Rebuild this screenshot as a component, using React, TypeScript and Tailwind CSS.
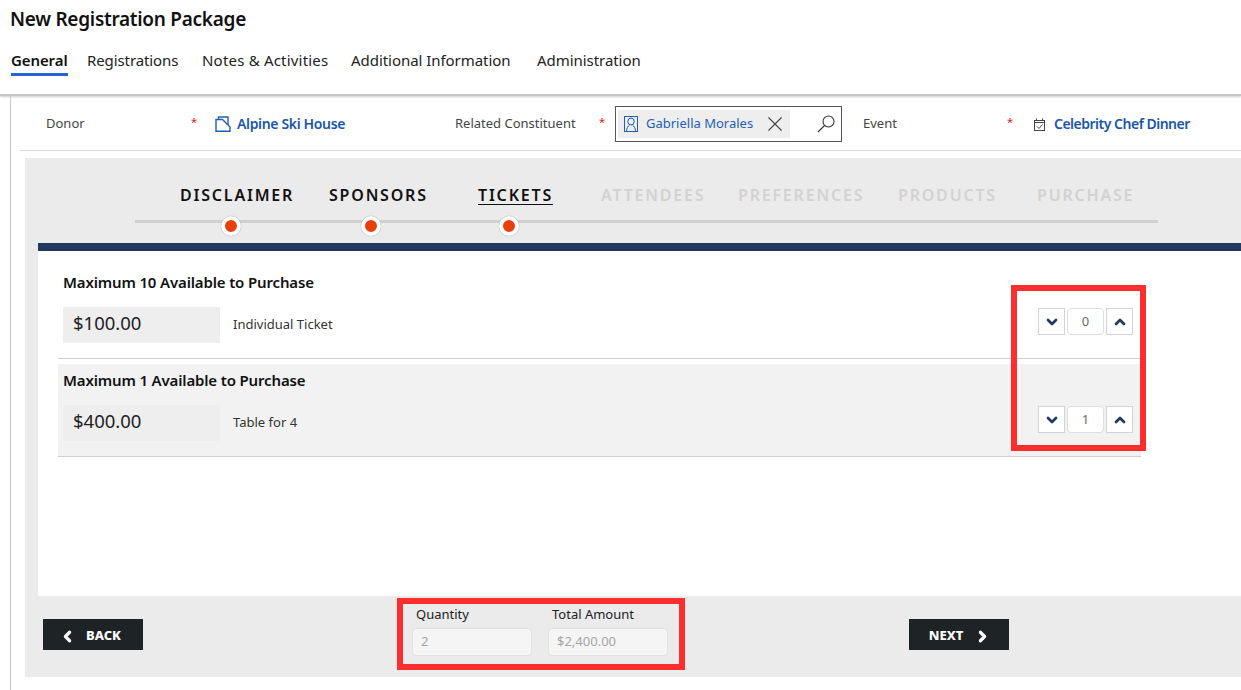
import React from "react";
import { ChevronDown, ChevronLeft, ChevronRight, ChevronUp } from "lucide-react";

const font = "font-['Noto_Sans','Open_Sans',sans-serif]";

const tabs = [
  { label: "General", w: "w-[76px]", active: true, track: "tracking-[-0.1px]" },
  { label: "Registrations", w: "w-[115px]", track: "tracking-[-0.1px]" },
  { label: "Notes & Activities", w: "w-[149px]", track: "tracking-[0.2px]" },
  { label: "Additional Information", w: "w-[186px]", track: "tracking-[-0.05px]" },
  { label: "Administration", w: "w-[120px]", track: "tracking-[-0.05px]" },
];

const steps = [
  { label: "DISCLAIMER", x: "w-[149px]", done: true },
  { label: "SPONSORS", x: "w-[149px]", done: true },
  { label: "TICKETS", x: "w-[123px]", done: true, current: true },
  { label: "ATTENDEES", x: "w-[137px]" },
  { label: "PREFERENCES", x: "w-[160px]" },
  { label: "PRODUCTS", x: "w-[139px]" },
  { label: "PURCHASE", x: "w-[110px]" },
];

const ContactIcon = ({ className }: { className?: string }) => (
  <svg viewBox="0 0 16 16" fill="none" stroke="currentColor" strokeWidth="1" className={className}>
    <rect x="1.5" y="0.5" width="13" height="15" />
    <ellipse cx="8" cy="5.5" rx="3.2" ry="3.5" />
    <path d="M3.5 15.5c0-3.5 1.6-5.6 3-6.4M12.5 15.5c0-3.5-1.6-5.6-3-6.4" />
  </svg>
);

const AccountIcon = ({ className }: { className?: string }) => (
  <svg viewBox="0 0 16 16" fill="none" stroke="currentColor" strokeWidth="1.4" className={className}>
    <path d="M1 3.5h6.5l7.5 7.5v4.3H1z" />
    <path d="M3.5 3.5V1h9.5v8" />
  </svg>
);

const LookupIcon = ({ className }: { className?: string }) => (
  <svg viewBox="0 0 18 18" fill="none" stroke="currentColor" strokeWidth="1.1" className={className}>
    <circle cx="11.5" cy="6.5" r="5.5" />
    <path d="M7.5 10.5L1 17" />
  </svg>
);

const EventIcon = ({ className }: { className?: string }) => (
  <svg viewBox="0 0 13 13" fill="none" stroke="currentColor" strokeWidth="1" className={className}>
    <rect x="1.5" y="2.5" width="10" height="10" />
    <path d="M1.5 4.5h10M3.5 0.5v2M9.5 0.5v2M4 8.5l2 2 3.5-4" />
  </svg>
);

const Stepper = ({ value }: { value: number }) => (
  <div className="flex items-center gap-[2px] mt-[1px]">
    <button className="w-[27px] h-[27px] flex items-center justify-center border border-[#d0d4d8] bg-white text-[#1f3864]">
      <ChevronDown size={16} strokeWidth={4} />
    </button>
    <div className="w-[37px] h-[27px] flex items-center justify-center border border-[#dcdfe3] rounded-[4px] bg-white text-[13px] text-[#6b6b6b]">
      {value}
    </div>
    <button className="w-[27px] h-[27px] flex items-center justify-center border border-[#d0d4d8] bg-white text-[#1f3864]">
      <ChevronUp size={16} strokeWidth={4} />
    </button>
  </div>
);

const TicketRow = ({ title, price, name, qty, shaded }: { title: string; price: string; name: string; qty: number; shaded?: boolean }) => (
  <div className={`w-[1083px] h-[93px] border-b border-[#cfcfcf] pl-[5px] pr-[8px] ${shaded ? "bg-[#f2f2f2]" : "bg-white"}`}>
    <div className="h-[41px] pt-[6px] text-[15px] leading-[20px] font-semibold text-[#111] tracking-[-0.15px]">{title}</div>
    <div className="flex items-start justify-between">
      <div className="flex items-center">
        <div className="w-[157px] h-[36px] bg-[#eeeeee] pl-[10px] pb-[5px] flex items-center text-[18.5px] text-[#222]">{price}</div>
        <span className="ml-[13px] text-[13px] text-[#333]">{name}</span>
      </div>
      <Stepper value={qty} />
    </div>
  </div>
);

const ReadField = ({ label, value }: { label: string; value: string }) => (
  <div className="w-[120px]">
    <div className="pl-[4px] text-[13px] leading-[18px] text-[#222]">{label}</div>
    <div className="mt-[5px] h-[28px] flex items-center pl-[8px] bg-[#f5f5f5] border border-[#e2e2e2] rounded-[4px] text-[13px] text-[#a5a5a5]">
      {value}
    </div>
  </div>
);

export default function App() {
  return (
    <div className={`relative w-[1241px] h-[690px] overflow-hidden bg-white ${font}`}>
      <header className="h-[96px] pl-[10px] border-b-2 border-[#c4c4c4] shadow-[0_1px_2px_rgba(0,0,0,0.2)]">
        <h1 className="pt-[7px] h-[48px] text-[19px] leading-[24px] font-semibold text-[#111] tracking-[-0.28px]">New Registration Package</h1>
        <nav className="flex pl-px">
          {tabs.map((t) => (
            <div key={t.label} className={t.w}>
              <div className={`inline-block h-[27px] text-[15px] leading-[22px] ${t.track} ${t.active ? "font-semibold border-b-[3px] border-[#2563d8] text-[#111]" : "text-[#222]"}`}>
                {t.label}
              </div>
            </div>
          ))}
        </nav>
      </header>

      <main className="ml-[10px] h-[594px] border-l border-[#c8c8c8] pl-[9px]">
        <div className="h-[55px] pt-[2px] border-b border-[#d8d8d8] flex items-center text-[13px] text-[#444]">
          <span className="ml-[26px] w-[145px]">Donor</span>
          <span className="w-[24px] text-[11px] -mt-[3px] text-[#e02020]">*</span>
          <AccountIcon className="w-[16px] h-[16px] text-[#1f5fb4]" />
          <span className="ml-[6px] w-[218px] -mt-[1px] text-[14px] font-semibold text-[#1a56a8] tracking-[-0.35px]">Alpine Ski House</span>
          <span className="w-[144px]">Related Constituent</span>
          <span className="w-[16px] text-[11px] -mt-[3px] text-[#e02020]">*</span>
          <div className="w-[227px] h-[36px] border border-[#555] pl-[2px] flex items-center">
            <div className="w-[172px] h-[28px] bg-[#eeeeee] pl-[5px] flex items-center text-[13px] text-[#1f5fb4]">
              <ContactIcon className="w-[16px] h-[16px] shrink-0" />
              <span className="ml-[7px]">Gabriella Morales</span>
              <svg viewBox="0 0 14 14" fill="none" stroke="#444" strokeWidth="1.1" className="ml-auto mr-[8px] w-[14px] h-[14px]">
                <path d="M0.5 0.5l13 13M13.5 0.5l-13 13" />
              </svg>
            </div>
            <LookupIcon className="ml-[27px] w-[18px] h-[18px] text-[#333]" />
          </div>
          <span className="ml-[21px] w-[144px]">Event</span>
          <span className="w-[26px] text-[11px] -mt-[3px] text-[#e02020]">*</span>
          <EventIcon className="w-[13px] h-[13px] text-[#444]" />
          <span className="ml-[8px] -mt-[1px] text-[14px] font-semibold text-[#1a56a8] tracking-[-0.5px]">Celebrity Chef Dinner</span>
        </div>

        <section className="mt-[7px] ml-[5px] h-[519px] bg-[#ebebeb] pl-[13px]">
          <div className="relative h-[85px]">
            <div className="flex pl-[142px] pt-[25px]">
              {steps.map((s) => (
                <div key={s.label} className={`${s.x} shrink-0`}>
                  <span className={`text-[16px] leading-[24px] font-semibold tracking-[1.8px] ${s.done ? "text-[#111]" : "text-[#d2d2d2]"} ${s.current ? "underline underline-offset-[3px] decoration-1" : ""}`}>
                    {s.label}
                  </span>
                </div>
              ))}
            </div>
            <div className="absolute left-[97px] top-[62px] w-[1023px] h-[3px] bg-[#d0d0d0]" />
            <span className="absolute left-[183px] top-[58px] w-[20px] h-[20px] rounded-full bg-[#ea3f0c] border-[4px] border-white shadow-[0_0_1px_rgba(0,0,0,0.45)]" />
            <span className="absolute left-[323px] top-[58px] w-[20px] h-[20px] rounded-full bg-[#ea3f0c] border-[4px] border-white shadow-[0_0_1px_rgba(0,0,0,0.45)]" />
            <span className="absolute left-[461px] top-[58px] w-[20px] h-[20px] rounded-full bg-[#ea3f0c] border-[4px] border-white shadow-[0_0_1px_rgba(0,0,0,0.45)]" />
          </div>
          <div className="h-[8px] bg-[#233a60]" />
          <div className="h-[345px] bg-white pl-[20px] pt-[15px]">
            <TicketRow title="Maximum 10 Available to Purchase" price="$100.00" name="Individual Ticket" qty={0} />
            <div className="h-[5px]" />
            <TicketRow title="Maximum 1 Available to Purchase" price="$400.00" name="Table for 4" qty={1} shaded />
          </div>
          <div className="h-[81px] flex items-start">
            <button className="mt-[23px] ml-[5px] w-[100px] h-[31px] pt-[3px] pr-[6px] bg-[#1e2326] text-white text-[13px] font-extrabold flex items-center justify-center gap-[10px]">
              <ChevronLeft size={17} strokeWidth={4.5} />
              BACK
            </button>
            <div className="ml-[269px] mt-[9px] flex gap-[16px]">
              <ReadField label="Quantity" value="2" />
              <ReadField label="Total Amount" value="$2,400.00" />
            </div>
            <button className="mt-[23px] ml-[241px] w-[100px] h-[31px] pt-[3px] pl-[2px] bg-[#1e2326] text-white text-[13px] font-extrabold flex items-center justify-center gap-[11px]">
              NEXT
              <ChevronRight size={17} strokeWidth={4.5} />
            </button>
          </div>
        </section>
      </main>

      {/* red annotation boxes drawn over the screenshot */}
      <div className="absolute left-[1011px] top-[285px] w-[135px] h-[166px] border-[6px] border-[#ff2e2e]" />
      <div className="absolute left-[397px] top-[598px] w-[288px] h-[72px] border-[6px] border-[#ff2e2e]" />
    </div>
  );
}
